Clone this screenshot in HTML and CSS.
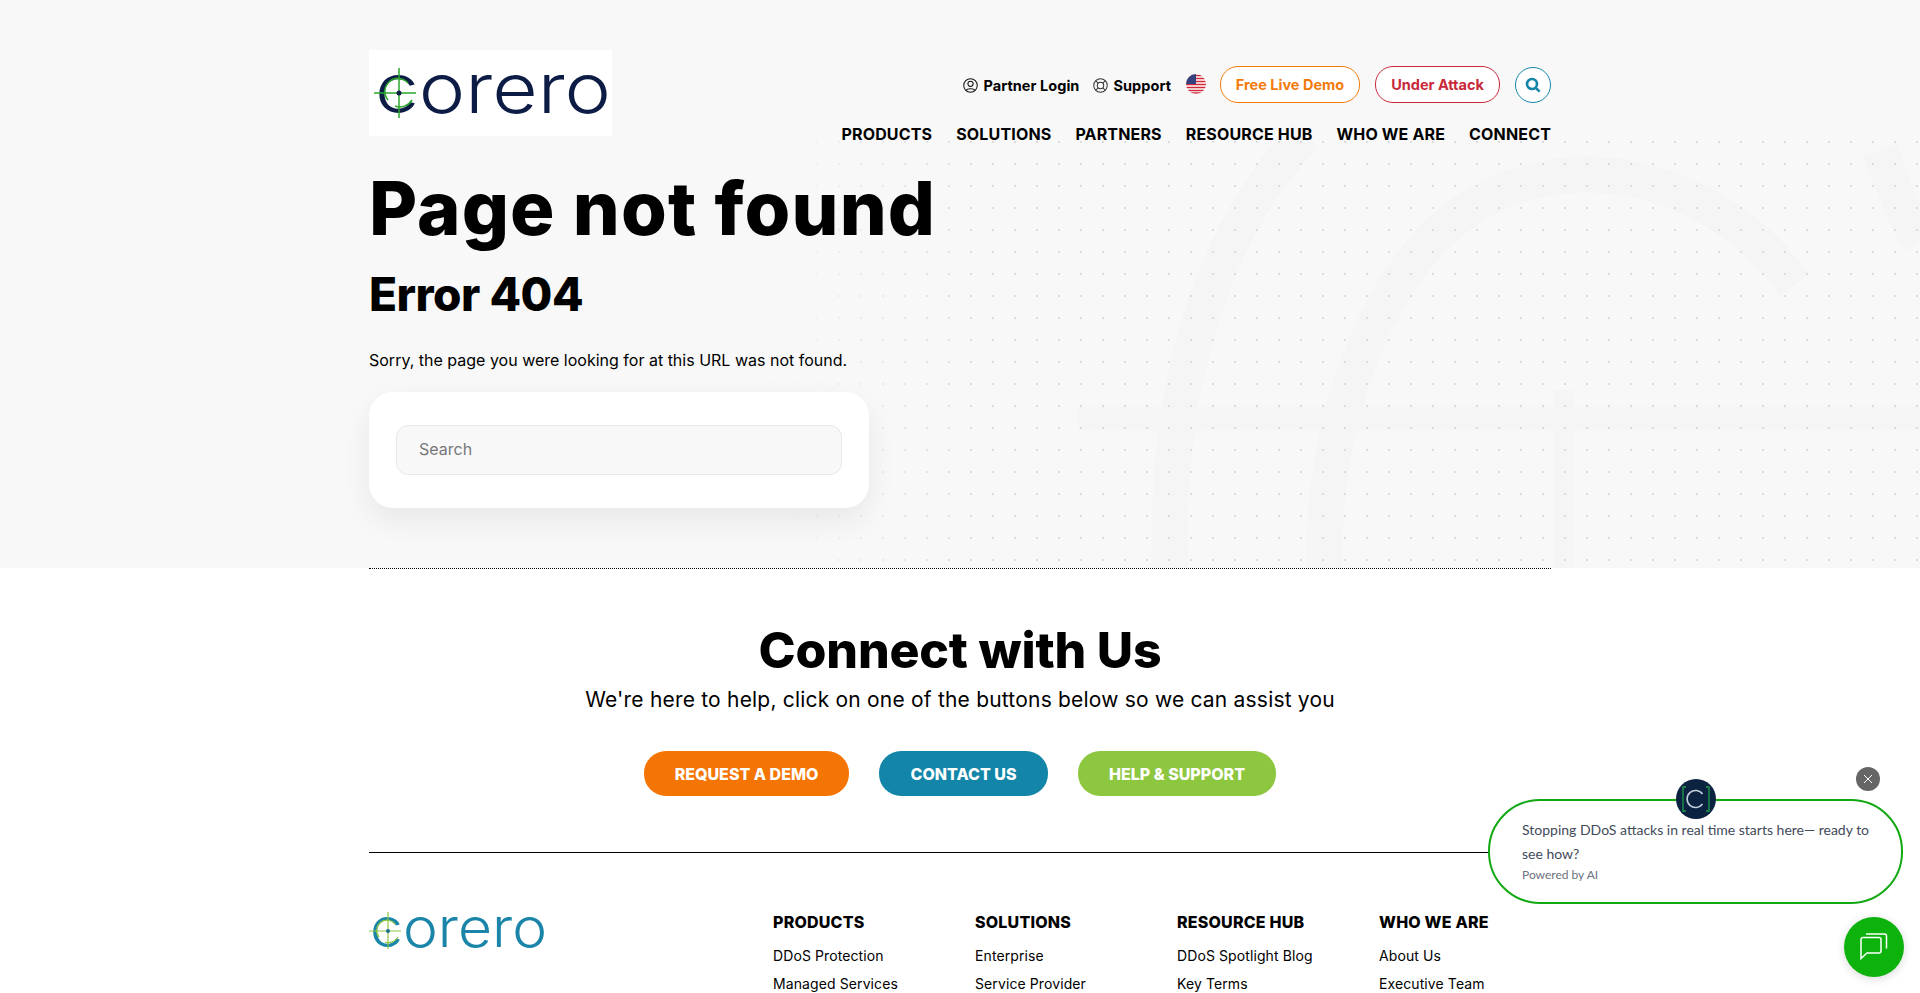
FILE: index.html
```html
<!DOCTYPE html>
<html lang="en">
<head>
  <meta charset="UTF-8" />
  <title>Page not found - Corero</title>
  <link rel="stylesheet" href="styles.css">
</head>
<body>

  <section class="hero">
    <!-- watermark and dots behind the hero -->
    <svg class="hero-mark" width="1920" height="568" viewBox="0 0 1920 568" aria-hidden="true">
      <g fill="none" stroke="#f5f5f5" stroke-width="36">
        <path d="M1170 568C1165 400 1205 240 1305 135" />
        <path d="M1325 568C1320 430 1375 265 1475 205C1575 145 1715 175 1795 285" />
        <path d="M1880 150C1895 190 1905 220 1920 240" />
        <path d="M1078 419H1920" stroke-width="24" />
        <path d="M1563 390V568" stroke-width="20" />
      </g>
    </svg>
    <div class="hero-dots"></div>

    <div class="container">
      <header class="site-header">
        <a class="logo-box" href="#">
          <svg class="logo-svg" width="243" height="86" viewBox="0 0 243 86">
            <text class="logo-text" x="6" y="63" fill="#0c1c45" textLength="236" lengthAdjust="spacingAndGlyphs">corero</text>
            <g fill="none" stroke="#2aa82a" stroke-width="1.5">
              <path d="M5 43H47M30 18V68" />
              <path d="M19 50A13 13 0 0 1 39 33M43 50A14 14 0 0 1 26 56" />
            </g>
            <circle cx="30" cy="43" r="2.5" fill="#0c1c45" />
          </svg>
        </a>
        <div class="header-right">
          <div class="top-row">
            <a class="top-link" href="#">
              <svg width="15" height="15" viewBox="0 0 16 16" fill="none" stroke="#111" stroke-width="1.1">
                <circle cx="8" cy="8" r="7.2" /><circle cx="8" cy="6.2" r="2.8" /><path d="M3.4 13.4C4.2 10.8 11.8 10.8 12.6 13.4" />
              </svg>
              Partner Login
            </a>
            <a class="top-link" href="#">
              <svg width="15" height="15" viewBox="0 0 16 16" fill="none" stroke="#333" stroke-width="1.1">
                <circle cx="8" cy="8" r="7.2" /><circle cx="8" cy="8" r="3.4" /><path d="M3 3L5.6 5.6M13 3L10.4 5.6M3 13L5.6 10.4M13 13L10.4 10.4" />
              </svg>
              Support
            </a>
            <svg class="flag" width="20" height="20" viewBox="0 0 20 20">
              <clipPath id="flag-clip"><circle cx="10" cy="10" r="10" /></clipPath>
              <g clip-path="url(#flag-clip)">
                <rect width="20" height="20" fill="#fff" />
                <path d="M0 1.5H20M0 4.5H20M0 7.5H20M0 10.5H20M0 13.5H20M0 16.5H20M0 19H20" stroke="#d0283a" stroke-width="1.5" />
                <rect width="10" height="10" fill="#35407f" />
              </g>
            </svg>
            <a class="pill pill-orange" href="#">Free Live Demo</a>
            <a class="pill pill-red" href="#">Under Attack</a>
            <a class="search-btn" href="#">
              <svg width="16" height="16" viewBox="0 0 16 16" fill="none" stroke="#1485a8" stroke-width="2.6">
                <circle cx="7" cy="7" r="5" /><path d="M10.8 10.8L14.6 14.6" />
              </svg>
            </a>
          </div>
          <nav class="main-nav">
            <a href="#">PRODUCTS</a>
            <a href="#">SOLUTIONS</a>
            <a href="#">PARTNERS</a>
            <a href="#">RESOURCE HUB</a>
            <a href="#">WHO WE ARE</a>
            <a href="#">CONNECT</a>
          </nav>
        </div>
      </header>

      <h1>Page not found</h1>
      <h2>Error 404</h2>
      <p class="sorry">Sorry, the page you were looking for at this URL was not found.</p>

      <div class="search-card">
        <input type="text" placeholder="Search" />
      </div>
    </div>
  </section>

  <div class="container">
    <div class="dotted-line"></div>

    <section class="connect">
      <h2 class="connect-title">Connect with Us</h2>
      <p class="connect-sub">We're here to help, click on one of the buttons below so we can assist you</p>
      <div class="connect-buttons">
        <a class="btn btn-orange" href="#">REQUEST A DEMO</a>
        <a class="btn btn-blue" href="#">CONTACT US</a>
        <a class="btn btn-green" href="#">HELP &amp; SUPPORT</a>
      </div>
    </section>

    <footer class="site-footer">
      <a class="footer-logo" href="#">
        <svg class="logo-svg" width="178" height="46" viewBox="0 0 178 46">
          <text class="footer-logo-text" x="1" y="35" fill="#1a85a8" textLength="177" lengthAdjust="spacingAndGlyphs">corero</text>
          <g fill="none" stroke="#8fc63f" stroke-width="1.2">
            <path d="M0 19H32M19 0V37" />
            <path d="M10 25A10 10 0 0 1 26 12M29 25A11 11 0 0 1 16 30" />
          </g>
          <circle cx="19" cy="19" r="2" fill="#1a6f8f" />
        </svg>
      </a>
      <div class="footer-col">
        <h4>PRODUCTS</h4>
        <a href="#">DDoS Protection</a>
        <a href="#">Managed Services</a>
      </div>
      <div class="footer-col">
        <h4>SOLUTIONS</h4>
        <a href="#">Enterprise</a>
        <a href="#">Service Provider</a>
      </div>
      <div class="footer-col">
        <h4>RESOURCE HUB</h4>
        <a href="#">DDoS Spotlight Blog</a>
        <a href="#">Key Terms</a>
      </div>
      <div class="footer-col">
        <h4>WHO WE ARE</h4>
        <a href="#">About Us</a>
        <a href="#">Executive Team</a>
      </div>
    </footer>
  </div>

  <!-- chat widget, fixed over the page -->
  <div class="chat-bubble">
    <p>Stopping DDoS attacks in real time starts here— ready to see how?</p>
    <span>Powered by AI</span>
  </div>
  <div class="chat-avatar">
    <svg width="40" height="40" viewBox="0 0 40 40" fill="none">
      <path d="M10 8H7V32H10M30 8H33V32H30" stroke="#1f9d4a" stroke-width="1.3" />
      <path d="M26.5 15A8.5 8.5 0 1 0 26.5 25" stroke="#c5d0dc" stroke-width="1.6" />
    </svg>
  </div>
  <button class="chat-close">
    <svg width="10" height="10" viewBox="0 0 10 10" stroke="#fff" stroke-width="1">
      <path d="M1 1L9 9M9 1L1 9" />
    </svg>
  </button>
  <button class="chat-btn">
    <svg width="30" height="30" viewBox="0 0 30 30" fill="none" stroke="#fff" stroke-width="1.5">
      <path d="M2 7.5A2 2 0 0 1 4 5.5H20A2 2 0 0 1 22 7.5V19A2 2 0 0 1 20 21H8L2 26.5Z" />
      <path d="M7 2H25.5A2 2 0 0 1 27.5 4V16.5" />
    </svg>
  </button>

</body>
</html>
```

FILE: styles.css
```css
html, body {
  height: 993px;
  overflow: hidden;
}

body {
  margin: 0;
  background: #fff;
  color: #000;
  font-family: 'Inter', sans-serif;
}

a {
  color: inherit;
  text-decoration: none;
}

.container {
  width: 1182px;
  margin: 0 auto;
  position: relative;
}

/* hero */
.hero {
  position: relative;
  height: 568px;
  background: #f8f8f8;
  overflow: hidden;
}

.hero-mark {
  position: absolute;
  left: 0;
  top: 0;
}

.hero-dots {
  position: absolute;
  left: 770px;
  top: 130px;
  right: 0;
  bottom: 0;
  background-image: radial-gradient(circle, #dcdcdc 1px, transparent 1.2px);
  background-size: 22px 22px;
  background-position: 14px 1px;
  -webkit-mask-image: linear-gradient(to right, transparent, #000 200px);
  mask-image: linear-gradient(to right, transparent, #000 200px);
}

.site-header {
  display: flex;
  justify-content: space-between;
  padding-top: 50px;
}

.logo-box {
  display: block;
  width: 243px;
  height: 86px;
  background: #fff;
}

.logo-svg {
  display: block;
  overflow: visible;
}

.logo-text {
  font-family: 'Inter', sans-serif;
  font-size: 70px;
  font-weight: 300;
}

.footer-logo-text {
  font-family: 'Inter', sans-serif;
  font-size: 54px;
  font-weight: 300;
}

.header-right {
  display: flex;
  flex-direction: column;
  align-items: flex-end;
  gap: 21px;
  padding-top: 15px;
}

.top-row {
  display: flex;
  align-items: center;
}

.top-link {
  display: flex;
  align-items: center;
  gap: 5px;
  margin: 3px 14px 0 0;
  font-size: 14.5px;
  font-weight: 700;
  letter-spacing: 0.05px;
}

.flag {
  margin: 0 14px 0 1px;
}

.pill {
  display: flex;
  align-items: center;
  justify-content: center;
  height: 37px;
  box-sizing: border-box;
  border-radius: 18px;
  font-size: 14.5px;
  font-weight: 700;
  background: #fff;
}

.pill-orange {
  width: 140px;
  margin-right: 15px;
  color: #f47a0a;
  border: 1px solid #f47a0a;
}

.pill-red {
  width: 125px;
  margin-right: 15px;
  color: #c8283a;
  border: 1px solid #c8283a;
}

.search-btn {
  display: flex;
  align-items: center;
  justify-content: center;
  width: 36px;
  height: 36px;
  margin-top: 2px;
  box-sizing: border-box;
  border-radius: 50%;
  border: 1px solid #1485a8;
  background: #fff;
}

.main-nav {
  display: flex;
  gap: 24px;
  font-size: 16px;
  font-weight: 700;
  letter-spacing: 0.16px;
}

h1 {
  position: relative;
  margin: 0;
  padding-top: 19px;
  font-size: 74px;
  line-height: 90px;
  font-weight: 800;
  letter-spacing: 1.1px;
}

.hero h2 {
  position: relative;
  margin: 11px 0 0;
  font-size: 46px;
  line-height: 60px;
  font-weight: 800;
  letter-spacing: -0.5px;
}

.sorry {
  position: relative;
  margin: 24px 0 0;
  font-size: 16px;
  line-height: 24px;
}

.search-card {
  position: relative;
  width: 500px;
  box-sizing: border-box;
  margin-top: 20px;
  padding: 33px 27px;
  background: #fff;
  border-radius: 24px;
  box-shadow: 0 12px 30px rgba(0,0,0,0.07);
}

.search-card input {
  display: block;
  width: 100%;
  height: 50px;
  box-sizing: border-box;
  padding: 0 22px 2px;
  font-family: 'Inter', sans-serif;
  font-size: 16px;
  background: #f8f8f8;
  border: 1px solid #e8e8e8;
  border-radius: 12px;
}

.search-card input::placeholder {
  color: #777;
}

.dotted-line {
  border-top: 1px dotted #000;
}

/* connect */
.connect {
  text-align: center;
}

.connect-title {
  margin: 0;
  padding-top: 50px;
  font-size: 50px;
  line-height: 62px;
  font-weight: 800;
  letter-spacing: -0.2px;
}

.connect-sub {
  margin: 4px 0 0;
  font-size: 21px;
  line-height: 30px;
  letter-spacing: 0.2px;
}

.connect-buttons {
  display: flex;
  justify-content: center;
  gap: 30px;
  margin-top: 36px;
}

.btn {
  display: flex;
  align-items: center;
  justify-content: center;
  height: 45px;
  border-radius: 22px;
  color: #fff;
  font-size: 16px;
  font-weight: 800;
}

.btn-orange {
  width: 205px;
  background: #f47504;
}

.btn-blue {
  width: 169px;
  background: #1285a8;
}

.btn-green {
  width: 198px;
  background: #8dc63f;
}

/* footer */
.site-footer {
  display: grid;
  grid-template-columns: 404px repeat(4, 202px);
  margin-top: 56px;
  padding-top: 59px;
  border-top: 1px solid #000;
}

.footer-logo {
  display: block;
}

.footer-col h4 {
  margin: 0 0 13px;
  font-size: 16px;
  line-height: 20px;
  font-weight: 800;
  letter-spacing: 0.2px;
}

.footer-col a {
  display: block;
  margin-bottom: 6px;
  font-size: 14px;
  line-height: 22px;
  letter-spacing: 0.1px;
}

/* chat */
.chat-bubble {
  position: fixed;
  left: 1488px;
  top: 799px;
  width: 415px;
  height: 105px;
  box-sizing: border-box;
  padding: 17px 24px 0 32px;
  background: #fff;
  border: 2px solid #12a812;
  border-radius: 52px;
  font-family: 'Lato', sans-serif;
}

.chat-bubble p {
  margin: 0;
  font-size: 14px;
  line-height: 24px;
  color: #3f4a5a;
}

.chat-bubble span {
  display: block;
  font-size: 12px;
  line-height: 18px;
  color: #6b7280;
}

.chat-avatar {
  position: fixed;
  left: 1676px;
  top: 779px;
  width: 40px;
  height: 40px;
  border-radius: 50%;
  background: #0b2240;
}

.chat-close {
  position: fixed;
  left: 1856px;
  top: 767px;
  width: 24px;
  height: 24px;
  padding: 0;
  display: flex;
  align-items: center;
  justify-content: center;
  border: none;
  border-radius: 50%;
  background: #666;
}

.chat-btn {
  position: fixed;
  left: 1844px;
  top: 917px;
  width: 60px;
  height: 60px;
  padding: 0;
  display: flex;
  align-items: center;
  justify-content: center;
  border: none;
  border-radius: 50%;
  background: #0db20d;
  box-shadow: 0 2px 10px rgba(0,0,0,0.15);
}
```
